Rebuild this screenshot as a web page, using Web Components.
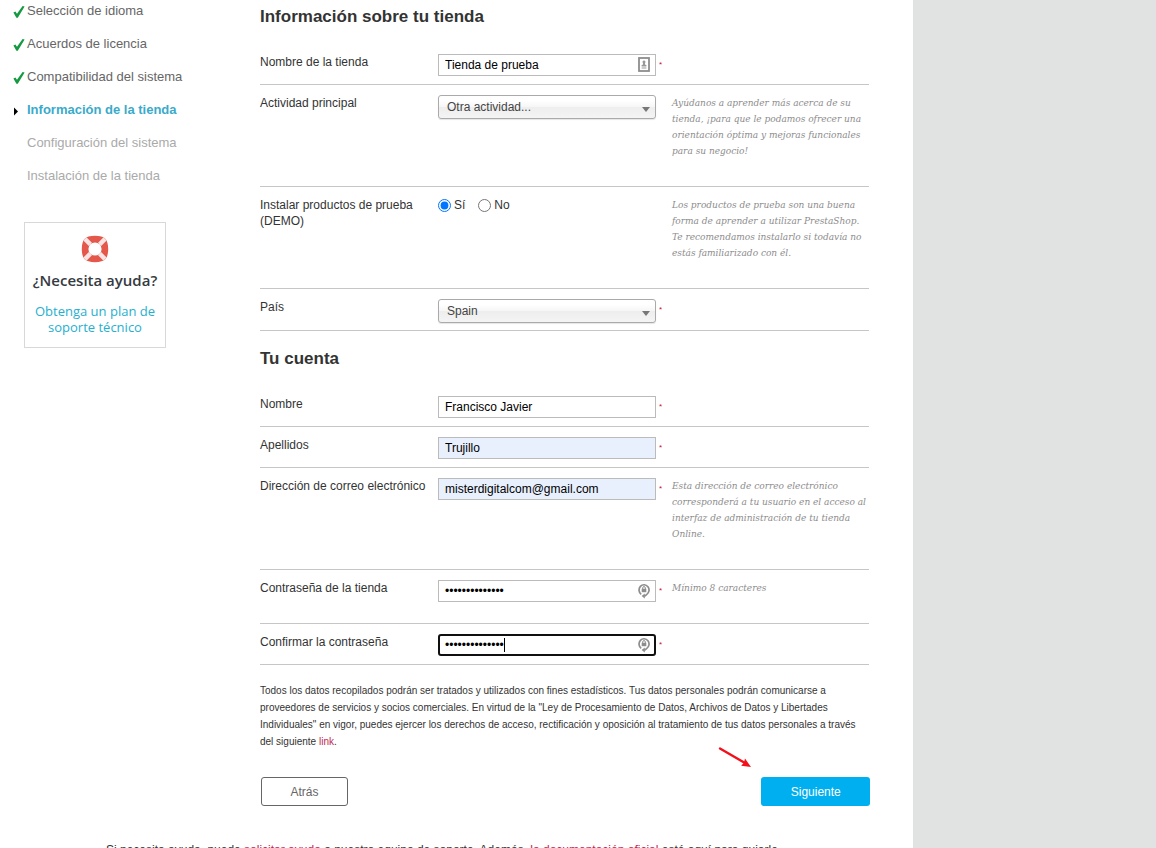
<!DOCTYPE html>
<html lang="es">
<head>
<meta charset="utf-8">
<meta name="viewport" content="width=device-width, initial-scale=1">
<title>Información de la tienda</title>
<style>
  html { background: #e0e3e2; scrollbar-width: none; }
  body {
    margin: 0;
    font: 12px/16px "Liberation Sans", Arial, sans-serif;
    color: #333;
  }
</style>
</head>
<body>
<install-page>
  <step-list slot="steps">
    <step-item state="done">Selección de idioma</step-item>
    <step-item state="done">Acuerdos de licencia</step-item>
    <step-item state="done">Compatibilidad del sistema</step-item>
    <step-item state="current">Información de la tienda</step-item>
    <step-item>Configuración del sistema</step-item>
    <step-item>Instalación de la tienda</step-item>
  </step-list>
  <help-card slot="steps"></help-card>

  <form-section heading="Información sobre tu tienda">
    <field-row label="Nombre de la tienda" value="Tienda de prueba" icon="contact" required></field-row>
    <field-row label="Actividad principal" type="select" value="Otra actividad...">
      <span slot="hint">Ayúdanos a aprender más acerca de su<br>tienda, ¡para que le podamos ofrecer una<br>orientación óptima y mejoras funcionales<br>para su negocio!</span>
    </field-row>
    <field-row label="Instalar productos de prueba (DEMO)" type="radio">
      <span slot="hint">Los productos de prueba son una buena<br>forma de aprender a utilizar PrestaShop.<br>Te recomendamos instalarlo si todavía no<br>estás familiarizado con él.</span>
    </field-row>
    <field-row label="País" type="select" value="Spain" required></field-row>
  </form-section>

  <form-section heading="Tu cuenta">
    <field-row label="Nombre" value="Francisco Javier" required></field-row>
    <field-row label="Apellidos" value="Trujillo" filled required></field-row>
    <field-row label="Dirección de correo electrónico" type="email" value="misterdigitalcom@gmail.com" filled required>
      <span slot="hint">Esta dirección de correo electrónico<br>corresponderá a tu usuario en el acceso al<br>interfaz de administración de tu tienda<br>Online.</span>
    </field-row>
    <field-row label="Contraseña de la tienda" type="password" value="prestashop1234" icon="lock" required>
      <span slot="hint">Mínimo 8 caracteres</span>
    </field-row>
    <field-row label="Confirmar la contraseña" type="password" value="prestashop1234" icon="lock" active required></field-row>
  </form-section>

  <privacy-note></privacy-note>
  <form-actions></form-actions>
  <page-footer slot="footer"></page-footer>
</install-page>

<script>
class BaseElement extends HTMLElement {
  connectedCallback() {
    if (!this.shadowRoot) {
      this.attachShadow({ mode: "open" }).innerHTML = this.render();
    }
  }
}

customElements.define("install-page", class extends BaseElement {
  render() {
    return `<style>
      :host { display: block; margin-right: 21%; background: #fff; }
      .columns { display: grid; grid-template-columns: 260px minmax(0, 1fr); padding-right: 44px; }
      aside { padding-top: 3px; }
      main { padding-top: 5px; }
    </style>
    <div class="columns">
      <aside><slot name="steps"></slot></aside>
      <main><slot></slot></main>
    </div>
    <slot name="footer"></slot>`;
  }
});

customElements.define("step-list", class extends BaseElement {
  render() {
    return `<style>
      :host { display: block; }
      nav { display: flex; flex-direction: column; gap: 17px; padding-left: 13px; }
    </style><nav aria-label="Pasos"><slot></slot></nav>`;
  }
});

customElements.define("step-item", class extends BaseElement {
  render() {
    const state = this.getAttribute("state");
    const marks = {
      done: `<svg width="12" height="12" viewBox="0 0 12 12"><path d="M.4 6.6 2.4 5.4 4 7.8 9.6 0 11.6.6 4.8 11.8 3.4 11.8Z" fill="#159a42"/></svg>`,
      current: `<svg width="12" height="12" viewBox="0 0 12 12"><path d="M1 2.5 5 6.5 1 10.5Z" fill="#000"/></svg>`
    };
    return `<style>
      :host { display: grid; grid-template-columns: 14px 1fr; align-items: center; font-size: 13px; color: #aaa; white-space: nowrap; }
      :host([state="done"]) { color: #666; }
      :host([state="current"]) { color: #3aaacb; font-weight: bold; }
      svg { display: block; margin-top: 2px; }
    </style><span>${marks[state] || ""}</span><slot></slot>`;
  }
});

customElements.define("help-card", class extends BaseElement {
  render() {
    return `<style>
      :host { display: block; box-sizing: border-box; width: 142px; margin: 38px 0 0 24px; padding: 12px 0;
        border: 1px solid #d8d8d8; text-align: center; font-family: "Open Sans", sans-serif; }
      svg { display: block; margin: 0 auto 7px; }
      strong { display: block; font-size: 15px; line-height: 20px; font-weight: 600; color: #363a41; margin-bottom: 13px; white-space: nowrap; }
      a { display: block; font-size: 13px; color: #25b0cf; text-decoration: none; white-space: nowrap; }
    </style>
    <svg width="28" height="28" viewBox="0 0 28 28">
      <path fill-rule="evenodd" d="M14 .8C19 .8 22.6 2 24.3 3.7 26 5.4 27.2 9 27.2 14S26 22.6 24.3 24.3 19 27.2 14 27.2 5.4 26 3.7 24.3.8 19 .8 14 2 5.4 3.7 3.7 9 .8 14 .8ZM14 7.4A6.6 6.6 0 1 0 14 20.6 6.6 6.6 0 1 0 14 7.4Z" fill="#e4574b"/>
      <path d="M3.9 3.9 9.4 9.4M24.1 3.9 18.6 9.4M3.9 24.1 9.4 18.6M24.1 24.1 18.6 18.6" stroke="#f6e3e2" stroke-width="4.4"/>
    </svg>
    <strong>¿Necesita ayuda?</strong>
    <a href="#soporte">Obtenga un plan de<br>soporte técnico</a>`;
  }
});

customElements.define("form-section", class extends BaseElement {
  render() {
    return `<style>
      :host { display: block; margin-bottom: 16px; }
      h2 { margin: 0 0 15px; font-size: 17px; line-height: 24px; color: #333; }
    </style><h2>${this.getAttribute("heading")}</h2><slot></slot>`;
  }
});

customElements.define("field-row", class extends BaseElement {
  control() {
    const type = this.getAttribute("type") || "text";
    const value = this.getAttribute("value") || "";
    if (type === "select") {
      return `<div class="box"><select id="control"><option>${value}</option></select>
        <svg class="arrow" width="8" height="5" viewBox="0 0 8 5"><path d="M0 0H8L4 5Z" fill="#777"/></svg></div>`;
    }
    if (type === "radio") {
      return `<div class="radios" role="radiogroup" aria-labelledby="name">
        <label><input type="radio" name="demo" checked>Sí</label>
        <label><input type="radio" name="demo">No</label></div>`;
    }
    const icons = {
      contact: `<svg class="icon" width="12" height="15" viewBox="0 0 12 15"><rect x="1" y="1" width="10" height="13" fill="#fff" stroke="#8d8d8d" stroke-width="1.8"/><path d="M6 3.4a1.5 1.5 0 0 1 .9 2.7L7.4 8H8.4V9.4H3.6V8H4.6L5.1 6.1A1.5 1.5 0 0 1 6 3.4ZM3.6 10.4H8.4V11.4H3.6Z" fill="#999"/></svg>`,
      lock: `<svg class="icon" width="12" height="16" viewBox="0 0 12 16"><path d="M3.2 11.4A5 5.3 0 1 1 8.6 11.6L6.4 13.2" fill="none" stroke="#8d8d8d" stroke-width="1.7"/><path d="M6.8 10.6V15.6L3.6 13.1Z" fill="#8d8d8d"/><path d="M4.7 6V4.9a1.3 1.3 0 0 1 2.6 0V6" fill="none" stroke="#8d8d8d"/><rect x="3.7" y="5.8" width="4.6" height="3.4" fill="#8d8d8d"/></svg>`
    };
    return `<div class="box"><input id="control" type="${type}" value="${value}" autocomplete="off">
      ${this.hasAttribute("active") ? '<span class="caret"></span>' : ""}
      ${icons[this.getAttribute("icon")] || ""}</div>`;
  }
  render() {
    const label = this.getAttribute("label");
    const name = this.getAttribute("type") === "radio"
      ? `<span class="name" id="name">${label}</span>`
      : `<label class="name" for="control">${label}</label>`;
    return `<style>
      :host { display: grid; grid-template-columns: 178px 218px 16px minmax(0, 1fr); align-items: start;
        box-sizing: border-box; min-height: 41px; padding: 10px 0 7px; border-bottom: 1px solid #c6c6c6; }
      .name { padding-right: 8px; }
      .box { position: relative; }
      .box input, select { display: block; box-sizing: border-box; width: 100%; margin: 0; font: inherit; }
      .box input { height: 22px; padding: 0 6px; border: 1px solid #bbb; border-radius: 0; background: #fff; color: #000; outline: none; }
      :host([filled]) .box input { background: #e8f0fe; }
      :host([active]) .box input { border: 2px solid #101010; border-radius: 3px; padding: 0 5px; }
      select { height: 24px; padding: 0 8px; appearance: none; border: 1px solid #aaa; border-radius: 3px; color: #444;
        background: linear-gradient(#fff 20%, #f6f6f6 50%, #eee 52%, #f4f4f4 100%); box-shadow: 0 1px 1px rgba(0, 0, 0, .1); }
      .arrow { position: absolute; right: 6px; top: 12px; }
      .icon { position: absolute; right: 6px; top: 3px; }
      .caret { position: absolute; left: 66px; top: 4px; width: 1px; height: 14px; background: #000; }
      .radios { display: flex; gap: 13px; }
      .radios label { display: flex; align-items: center; gap: 3px; }
      .radios input { width: 13px; height: 13px; margin: 0; accent-color: #0075ff; }
      .star { padding: 3px 0 0 3px; font-size: 8px; color: #c8102e; }
      ::slotted([slot="hint"]) { display: block; padding-bottom: 20px; white-space: nowrap;
        font: italic 10px/16px "DejaVu Serif Condensed", "DejaVu Serif", Georgia, serif; color: #8c8c8c; }
    </style>
    ${name}${this.control()}
    <span class="star">${this.hasAttribute("required") ? "*" : ""}</span>
    <slot name="hint"></slot>`;
  }
});

customElements.define("privacy-note", class extends BaseElement {
  render() {
    return `<style>
      :host { display: block; font-size: 10px; line-height: 17px; }
      p { margin: 0; padding-top: 1px; white-space: nowrap; }
      a { color: #c0274f; text-decoration: none; }
    </style>
    <p>Todos los datos recopilados podrán ser tratados y utilizados con fines estadísticos. Tus datos personales podrán comunicarse a<br>proveedores de servicios y socios comerciales. En virtud de la "Ley de Procesamiento de Datos, Archivos de Datos y Libertades<br>Individuales" en vigor, puedes ejercer los derechos de acceso, rectificación y oposición al tratamiento de tus datos personales a través<br>del siguiente <a href="#link">link</a>.</p>`;
  }
});

customElements.define("form-actions", class extends BaseElement {
  render() {
    return `<style>
      :host { display: flex; justify-content: space-between; position: relative; margin: 27px -1px 0 1px; }
      button { height: 29px; margin: 0; font: inherit; border-radius: 3px; cursor: pointer; }
      .back { width: 87px; border: 1px solid #666; background: #fff; color: #666; }
      .next { width: 109px; border: 0; background: #00aff0; color: #fff; }
      svg { position: absolute; right: 118px; top: -31px; }
    </style>
    <button class="back" type="button">Atrás</button>
    <button class="next" type="submit">Siguiente</button>
    <svg width="34" height="22" viewBox="0 0 34 22"><path d="M2 2.5 27 17" stroke="#f3101a" stroke-width="2.4" stroke-linecap="round"/><path d="M33 21 23.2 19.8 26 16.6 27 12.6Z" fill="#f3101a"/></svg>`;
  }
});

customElements.define("page-footer", class extends BaseElement {
  render() {
    return `<style>
      :host { display: block; padding: 36px 0 24px 106px; }
      p { margin: 0; white-space: nowrap; }
      a { color: #c0274f; text-decoration: none; }
    </style>
    <p>Si necesita ayuda, puede <a href="#ayuda">solicitar ayuda</a> a nuestro equipo de soporte. Además, <a href="#docs">la documentación oficial</a> está aquí para guiarle.</p>`;
  }
});
</script>
</body>
</html>
